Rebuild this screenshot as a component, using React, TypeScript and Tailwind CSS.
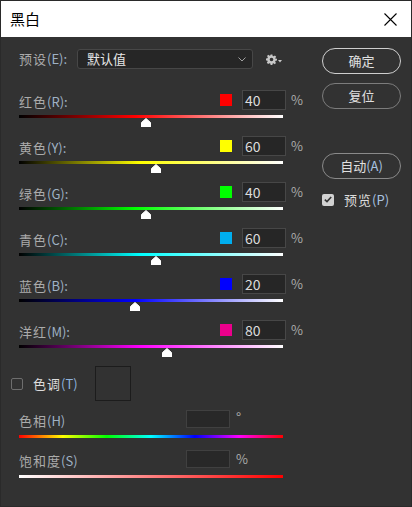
const font = { fontFamily: '"Noto Sans CJK SC", "Microsoft YaHei", sans-serif' };

const channels = [
  { name: "红色", key: "(R):", swatch: "bg-[#ff0000]", value: 40, track: "bg-[linear-gradient(to_right,#000000,#ff0000_44%,#ffffff)]" },
  { name: "黄色", key: "(Y):", swatch: "bg-[#ffff00]", value: 60, track: "bg-[linear-gradient(to_right,#000000,#ffff00_46%,#ffffff)]" },
  { name: "绿色", key: "(G):", swatch: "bg-[#00ff00]", value: 40, track: "bg-[linear-gradient(to_right,#000000,#00ff00_44%,#ffffff)]" },
  { name: "青色", key: "(C):", swatch: "bg-[#00aeef]", value: 60, track: "bg-[linear-gradient(to_right,#000000,#00ffff_46%,#ffffff)]" },
  { name: "蓝色", key: "(B):", swatch: "bg-[#0000ff]", value: 20, track: "bg-[linear-gradient(to_right,#000000,#0000ff_44%,#ffffff)]" },
  { name: "洋红", key: "(M):", swatch: "bg-[#ec008c]", value: 80, track: "bg-[linear-gradient(to_right,#000000,#ff00ff_46%,#ffffff)]" },
];

function Label({ cn, key2 }: { cn: string; key2: string }) {
  return (
    <span className="text-[13px] leading-[20px] text-[#ababab] tracking-[1px]">
      {cn}
      <span className="text-[#9fb1c4] tracking-normal">{key2}</span>
    </span>
  );
}

function Thumb({ value }: { value: number }) {
  const left = ((value + 200) / 500) * 264 - 5;
  return (
    <svg className="absolute top-[3px]" style={{ left }} width="10" height="9" viewBox="0 0 10 9">
      <path d="M5 0.5 L9.5 4.5 L9.5 9 L0.5 9 L0.5 4.5 Z" fill="#ffffff" stroke="#ffffff" strokeLinejoin="round" />
    </svg>
  );
}

function SliderRow({ c }: { c: (typeof channels)[number] }) {
  return (
    <div className="h-[46px]">
      <div className="flex h-[20px] items-center">
        <div className="flex-1">
          <Label cn={c.name} key2={c.key} />
        </div>
        <div className={`h-[12px] w-[12px] ${c.swatch}`} />
        <div className="ml-[10px] flex h-[20px] w-[44px] items-center border border-[#474747] bg-[#262626] pl-[2px] text-[14px] text-[#dcdcdc]">
          {c.value}
        </div>
        <span className="ml-[5px] w-[12px] text-[13px] text-[#ababab]">%</span>
      </div>
      <div className={`relative mt-[5px] h-[3px] w-[264px] ${c.track}`}>
        <Thumb value={c.value} />
      </div>
    </div>
  );
}

function PillButton({ children, border }: { children: React.ReactNode; border: string }) {
  return (
    <div className={`flex h-[26px] w-[79px] items-center justify-center rounded-full border ${border} text-[13px] text-[#e0e0e0]`}>
      {children}
    </div>
  );
}

export default function App() {
  return (
    <div className="flex h-[507px] w-[412px] flex-col border border-[#2a2a2a] bg-[#323232]" style={font}>
      <div className="flex h-[36px] shrink-0 items-center justify-between bg-white pl-[9px] pr-[14px]">
        <span className="text-[15px] text-black">黑白</span>
        <svg width="13" height="13" viewBox="0 0 13 13">
          <path d="M0.5 0.5 L12.5 12.5 M12.5 0.5 L0.5 12.5" stroke="#000" strokeWidth="1.1" />
        </svg>
      </div>

      <div className="flex flex-1">
        <div className="w-[302px] pl-[18px] pt-[12px]">
          <div className="flex h-[20px] items-center">
            <span className="w-[58px] text-[13px] text-[#ababab] tracking-[1px]">
              预设<span className="text-[#9fb1c4] tracking-normal">(E):</span>
            </span>
            <div className="flex h-[20px] w-[176px] items-center justify-between rounded-[3px] border border-[#474747] bg-[#262626] pl-[9px] pr-[6px]">
              <span className="text-[13px] text-[#e6e6e6]">默认值</span>
              <svg width="8" height="5" viewBox="0 0 8 5">
                <path d="M0.5 0.5 L4 4 L7.5 0.5" fill="none" stroke="#a0a0a0" strokeWidth="1" />
              </svg>
            </div>
            <div className="ml-[13px] flex items-center">
              <svg width="11" height="11" viewBox="0 0 24 24">
                <path
                  fill="#c8c8c8"
                  d="M10 1h4l.6 3.1 2.2.9 2.6-1.8 2.8 2.8-1.8 2.6.9 2.2L24 10v4l-3.1.6-.9 2.2 1.8 2.6-2.8 2.8-2.6-1.8-2.2.9L14 24h-4l-.6-3.1-2.2-.9-2.6 1.8-2.8-2.8 1.8-2.6-.9-2.2L0 14v-4l3.1-.6.9-2.2-1.8-2.6 2.8-2.8 2.6 1.8 2.2-.9z M12 8a4 4 0 1 0 0 8a4 4 0 1 0 0-8z"
                  fillRule="evenodd"
                />
              </svg>
              <svg className="ml-[1px] mt-[5px]" width="4" height="3" viewBox="0 0 4 3">
                <path d="M0 0 H4 L2 2.5 Z" fill="#c8c8c8" />
              </svg>
            </div>
          </div>

          <div className="mt-[21px]">
            {channels.map((c) => (
              <SliderRow key={c.name} c={c} />
            ))}
          </div>

          <div className="-ml-[8px] flex h-[35px] items-center">
            <div className="h-[12px] w-[12px] rounded-[2px] border border-[#6e6e6e]" />
            <span className="ml-[10px] w-[62px] text-[13px] text-[#dcdcdc] tracking-[1px]">
              色调<span className="text-[#8fb3dc] tracking-normal">(T)</span>
            </span>
            <div className="h-[35px] w-[36px] border border-[#1c1c1c]" />
          </div>

          <div className="mt-[9px] flex h-[18px] items-center">
            <div className="w-[167px]">
              <Label cn="色相" key2="(H)" />
            </div>
            <div className="h-[18px] w-[44px] border border-[#404040] bg-[#282828]" />
            <span className="ml-[6px] -mt-[3px] text-[14px] text-[#ababab]">°</span>
          </div>
          <div className="mt-[7px] h-[3px] w-[264px] bg-[linear-gradient(to_right,#ff0000,#ffff00_16.6%,#00ff00_33.3%,#00ffff_50%,#0000ff_66.6%,#ff00ff_83.3%,#ff0000)]" />

          <div className="mt-[12px] flex h-[18px] items-center">
            <div className="w-[167px]">
              <Label cn="饱和度" key2="(S)" />
            </div>
            <div className="h-[18px] w-[44px] border border-[#404040] bg-[#282828]" />
            <span className="ml-[6px] text-[13px] text-[#ababab]">%</span>
          </div>
          <div className="mt-[7px] h-[3px] w-[264px] bg-[linear-gradient(to_right,#ffffff,#ff0000)]" />
        </div>

        <div className="ml-[19px] flex flex-col pt-[11px]">
          <PillButton border="border-[#cfcfcf]">确定</PillButton>
          <div className="mt-[9px]">
            <PillButton border="border-[#7c7c7c]">复位</PillButton>
          </div>
          <div className="mt-[44px]">
            <PillButton border="border-[#8a8a8a]">
              自动<span className="text-[#a9c3e0]">(A)</span>
            </PillButton>
          </div>
          <div className="mt-[11px] flex items-center">
            <div className="flex h-[12px] w-[12px] items-center justify-center rounded-[2px] bg-[#d2d2d2]">
              <svg width="8" height="7" viewBox="0 0 8 7">
                <path d="M0.8 3.6 L3 5.6 L7.2 1" fill="none" stroke="#333" strokeWidth="1.6" />
              </svg>
            </div>
            <span className="ml-[10px] text-[13px] text-[#dcdcdc] tracking-[1px]">
              预览<span className="text-[#a9c3e0] tracking-normal">(P)</span>
            </span>
          </div>
        </div>
      </div>
    </div>
  );
}
